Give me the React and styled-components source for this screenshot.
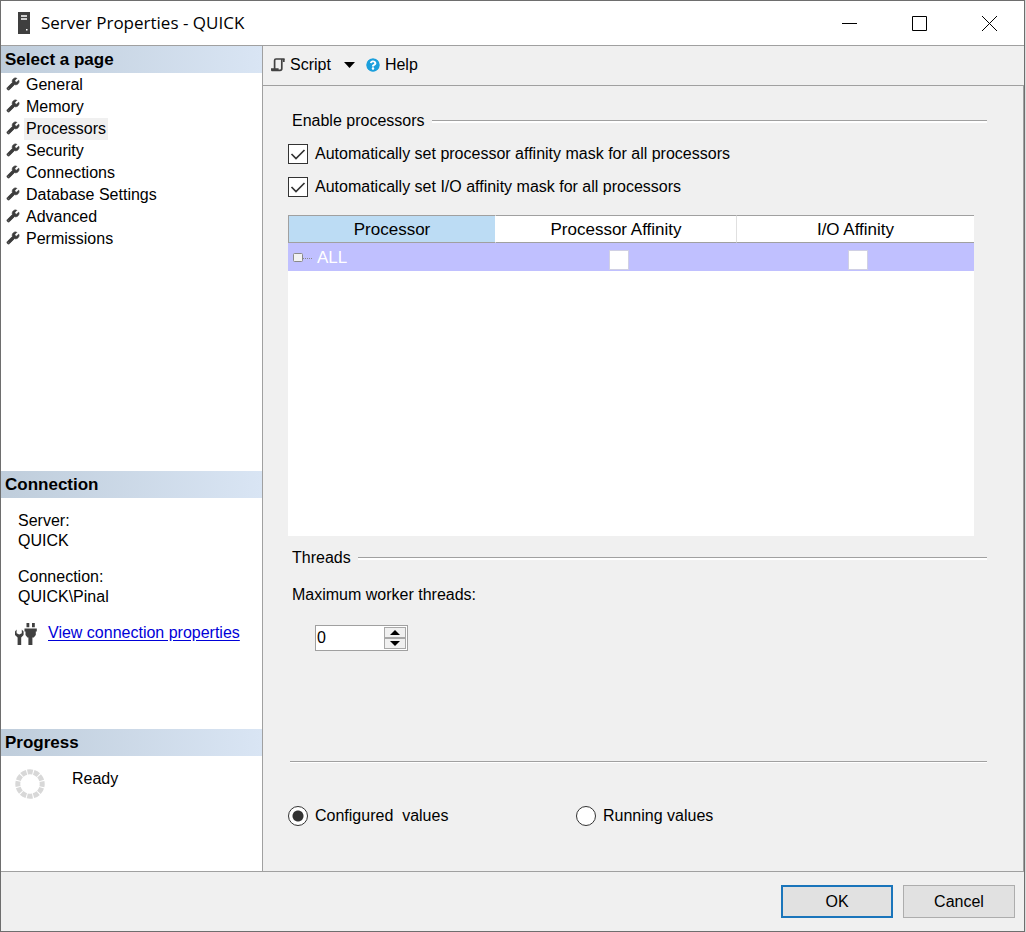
import React, { useState } from 'react'
import styled, { createGlobalStyle } from 'styled-components'
import { FaWrench, FaQuestionCircle } from 'react-icons/fa'

const GlobalStyle = createGlobalStyle`
  * {
    box-sizing: border-box;
  }
  body {
    margin: 0;
    background: #dcdcdc;
  }
  body, button, input {
    font-family: "Liberation Sans", Arial, sans-serif;
    font-size: 16px;
    line-height: 20px;
    color: #000;
  }
`
const Window = styled.div`
  display: flex;
  flex-direction: column;
  min-height: 100vh;
  margin-right: 1px;
  border: 1px solid #6e6e6e;
  background: #f0f0f0;
`
const TitleBar = styled.header`
  display: flex;
  align-items: center;
  height: 45px;
  padding-left: 16px;
  border-bottom: 1px solid #a0a0a0;
  background: #fff;
`
const Title = styled.h1`
  flex: 1;
  margin: 0 0 0 10px;
  font-family: "Open Sans", "Noto Sans", sans-serif;
  font-size: 17px;
  font-weight: 400;
  line-height: 24px;
`
const WindowButton = styled.button`
  display: grid;
  place-items: center;
  width: 70px;
  height: 44px;
  padding: 0;
  border: none;
  background: transparent;
  &:hover {
    background: #e5e5e5;
  }
`
const Body = styled.div`
  flex: 1;
  display: flex;
`
const Sidebar = styled.aside`
  display: flex;
  flex-direction: column;
  width: 262px;
  border-right: 1px solid #a0a0a0;
  background: #fff;
`
const Section = styled.section`
  flex: ${(props) => (props.$height ? 'none' : 1)};
  min-height: ${(props) => props.$height || 0}px;
`
const SectionTitle = styled.h2`
  margin: 0;
  padding: 0 4px;
  font-size: 17px;
  font-weight: 700;
  line-height: 27px;
  background: linear-gradient(to right, #bfcddb, #d9e5f4);
`
const PageList = styled.ul`
  margin: 0;
  padding: 1px 0 0 6px;
  list-style: none;
`
const PageItem = styled.li`
  display: flex;
  align-items: center;
  height: 22px;
  gap: 5px;
  color: #3c3c3c;
`
const WrenchIcon = styled(FaWrench)`
  margin-bottom: 2px;
  overflow: visible;
  stroke-width: 36px;
`
const PageButton = styled.button`
  height: 22px;
  padding: 0 2px;
  border: none;
  background: ${(props) => (props.$active ? '#f0f0f0' : 'transparent')};
`
const Details = styled.dl`
  margin: 13px 0 0 17px;
`
const Term = styled.dt``
const Value = styled.dd`
  margin: 0 0 16px;
`
const LinkRow = styled.div`
  display: flex;
  gap: 11px;
  padding-left: 14px;
`
const Link = styled.a`
  color: #0000d8;
  text-decoration: underline;
  text-underline-offset: 2px;
`
const ProgressRow = styled.div`
  display: flex;
  gap: 27px;
  padding: 13px 14px;
`
const Main = styled.main`
  flex: 1;
  display: flex;
  flex-direction: column;
  min-width: 0;
`
const Toolbar = styled.div`
  display: flex;
  align-items: center;
  height: 40px;
  padding: 0 0 2px 8px;
  border-bottom: 1px solid #a0a0a0;
`
const ToolButton = styled.button`
  display: flex;
  align-items: center;
  gap: 5px;
  padding: 0;
  margin-right: ${(props) => props.$gap || 0}px;
  border: none;
  background: transparent;
`
const HelpIcon = styled(FaQuestionCircle)`
  border-radius: 50%;
  color: #1b9fdc;
  background: radial-gradient(#fff 50%, transparent 51%);
`
const Content = styled.div`
  flex: 1;
  padding: 25px 36px 20px 25px;
  border-right: 1px solid #a0a0a0;
`
const GroupTitle = styled.h3`
  display: flex;
  align-items: center;
  gap: 7px;
  margin: 0;
  padding-left: 4px;
  font-size: 16px;
  font-weight: 400;
  &::after {
    content: "";
    flex: 1;
    height: 2px;
    border-top: 1px solid #a0a0a0;
    background: #fff;
  }
`
const Options = styled.div`
  padding: 6px 0 12px;
`
const OptionLabel = styled.label`
  display: flex;
  align-items: center;
  gap: 7px;
  height: 33px;
`
const CheckWrap = styled.span`
  display: inline-grid;
  width: 20px;
  height: 20px;
  vertical-align: middle;
  & > * {
    grid-area: 1 / 1;
  }
  & > svg {
    pointer-events: none;
  }
`
const CheckInput = styled.input`
  appearance: none;
  width: 20px;
  height: 20px;
  margin: 0;
  border: 1px solid ${(props) => (props.$flat ? '#d0d0e4' : '#333')};
  background: #fff;
`
const Grid = styled.div`
  height: 321px;
  margin-right: 13px;
  background: #fff;
`
const Table = styled.table`
  width: 100%;
  border-collapse: separate;
  border-spacing: 0;
  table-layout: fixed;
  font-size: 17px;
`
const HeadCell = styled.th`
  width: ${(props) => props.$width || 'auto'};
  height: 28px;
  padding: 1px 0 0;
  border-top: 1px solid #a0a0a0;
  border-bottom: 1px solid #a0a0a0;
  border-left: 1px solid ${(props) => props.$edge || '#fff'};
  font-weight: 400;
  background: ${(props) => (props.$selected ? '#bcdcf4' : '#fff')};
`
const Cell = styled.td`
  height: 28px;
  padding: ${(props) => (props.$name ? '1px 4px 0' : '5px 0 0 6px')};
  text-align: ${(props) => (props.$name ? 'left' : 'center')};
  color: #fff;
  line-height: 18px;
  background: #c0c0ff;
`
const NodeName = styled.span`
  display: flex;
  align-items: center;
  gap: 5px;
`
const Threads = styled.div`
  padding-top: 12px;
`
const FieldLabel = styled.label`
  display: block;
  margin: 17px 0 20px;
  padding-left: 4px;
`
const Spinner = styled.div`
  display: flex;
  width: 93px;
  height: 26px;
  margin-left: 27px;
  padding: 1px 0;
  border: 1px solid #a0a0a0;
  background: #fff;
`
const SpinnerInput = styled.input`
  flex: 1;
  min-width: 0;
  padding: 0 1px;
  border: none;
  outline: none;
  appearance: textfield;
  &::-webkit-inner-spin-button {
    appearance: none;
  }
`
const SpinnerButtons = styled.div`
  display: flex;
  flex-direction: column;
  width: 22px;
  margin-right: 1px;
`
const StepButton = styled.button`
  flex: 1;
  display: grid;
  place-items: center;
  padding: 0;
  border: 1px solid #a8a8a8;
  background: #f0f0f0;
`
const Divider = styled.hr`
  height: 2px;
  margin: 110px 0 0 2px;
  border: none;
  border-top: 1px solid #a0a0a0;
  background: #fff;
`
const RadioGroup = styled.div`
  display: grid;
  grid-template-columns: 288px 1fr;
  padding-top: 36px;
`
const RadioInput = styled.input`
  appearance: none;
  width: 20px;
  height: 20px;
  margin: 0;
  border: 1px solid #333;
  border-radius: 50%;
  background: #fff;
  &:checked {
    background: radial-gradient(circle, #333 5px, #fff 6px);
  }
`
const RadioText = styled.span`
  white-space: pre;
`
const Footer = styled.footer`
  display: flex;
  justify-content: flex-end;
  gap: 10px;
  padding: 13px 9px;
  border-top: 1px solid #a0a0a0;
`
const DialogButton = styled.button`
  width: 112px;
  height: 33px;
  padding: 0;
  border: ${(props) => (props.$primary ? '2px solid #1a75bb' : '1px solid #adadad')};
  background: #e1e1e1;
`

const pages = [
  'General',
  'Memory',
  'Processors',
  'Security',
  'Connections',
  'Database Settings',
  'Advanced',
  'Permissions',
]

const ServerIcon = () => (
  <svg width="14" height="22" viewBox="0 0 14 22">
    <path d="M1 0h12v22H1z" fill="#3f3f3f" />
    <path d="M4 4h6M4 7h6" stroke="#fff" strokeWidth="1.3" />
    <path d="M9 17h1.5v1.5H9z" fill="#fff" />
  </svg>
)

const ScriptIcon = () => (
  <svg width="14" height="14" viewBox="0 0 14 14" fill="none" stroke="#424242" strokeWidth="1.7">
    <path d="M3.6 10.8V2.4Q3.6 1 5 1H13.6M10.8 1V10.6Q10.8 12.4 9 12.4H1.6Q.6 12.4.6 11.2H7.6" />
    <path d="M12.8 1V4" />
  </svg>
)

const PlugIcon = () => (
  <svg width="22" height="22" viewBox="0 0 22 22" fill="#404040">
    <path d="M1.6 6.6V10.2L4.2 11.6 6.8 10.2V6.6L8.6 8.4V12L6.2 14.4V22H2.6V14.4L0 12V8.4Z" />
    <path d="M11.5 0h2.8v4.2h-2.8zM17 0h2.8v4.2H17zM9.5 5.5H21.8V8.5H20.8V12L18.8 14.5H17.4V22H13.4V14.5H12.4L10.5 12V8.5H9.5Z" />
  </svg>
)

const ProgressRing = () => (
  <svg width="30" height="30" viewBox="0 0 30 30">
    <circle cx="15" cy="15" r="12.2" fill="none" stroke="#d8d8d8" strokeWidth="5" pathLength="120" strokeDasharray="8.4 1.6" strokeDashoffset="4" />
  </svg>
)

const Arrow = ({ width = 10, height = 5, up }) => (
  <svg width={width} height={height} viewBox="0 0 10 6" preserveAspectRatio="none">
    <path d={up ? 'M5 0 10 6H0Z' : 'M0 0H10L5 6Z'} />
  </svg>
)

const CheckBox = ({ checked, flat, ...rest }) => (
  <CheckWrap>
    <CheckInput type="checkbox" checked={checked} $flat={flat} {...rest} />
    {checked && (
      <svg width="20" height="20" fill="none" stroke="#333" strokeWidth="1.7">
        <path d="M3.5 10 8 14.5 16.5 6" />
      </svg>
    )}
  </CheckWrap>
)

const App = () => {
  const [page, setPage] = useState('Processors')
  const [autoMask, setAutoMask] = useState(true)
  const [autoIo, setAutoIo] = useState(true)
  const [cpu, setCpu] = useState(false)
  const [io, setIo] = useState(false)
  const [threads, setThreads] = useState(0)
  const [view, setView] = useState('configured')

  return (
    <Window>
      <GlobalStyle />
      <TitleBar>
        <ServerIcon />
        <Title>Server Properties - QUICK</Title>
        <WindowButton aria-label="Minimize">
          <svg width="15" height="15"><path d="M0 7.5h15" stroke="#000" /></svg>
        </WindowButton>
        <WindowButton aria-label="Maximize">
          <svg width="15" height="15"><path d="M.5.5h14v14H.5z" fill="none" stroke="#000" /></svg>
        </WindowButton>
        <WindowButton aria-label="Close">
          <svg width="15" height="15"><path d="M0 0 15 15M15 0 0 15" stroke="#000" /></svg>
        </WindowButton>
      </TitleBar>
      <Body>
        <Sidebar>
          <Section>
            <SectionTitle>Select a page</SectionTitle>
            <PageList>
              {pages.map((name) => (
                <PageItem key={name}>
                  <WrenchIcon size={12} />
                  <PageButton $active={name === page} onClick={() => setPage(name)}>{name}</PageButton>
                </PageItem>
              ))}
            </PageList>
          </Section>
          <Section $height={258}>
            <SectionTitle>Connection</SectionTitle>
            <Details>
              <Term>Server:</Term>
              <Value>QUICK</Value>
              <Term>Connection:</Term>
              <Value>QUICK\Pinal</Value>
            </Details>
            <LinkRow>
              <PlugIcon />
              <Link href="#connection">View connection properties</Link>
            </LinkRow>
          </Section>
          <Section $height={142}>
            <SectionTitle>Progress</SectionTitle>
            <ProgressRow>
              <ProgressRing />
              <span>Ready</span>
            </ProgressRow>
          </Section>
        </Sidebar>
        <Main>
          <Toolbar>
            <ToolButton $gap={13}><ScriptIcon />Script</ToolButton>
            <ToolButton $gap={11} aria-label="Script options"><Arrow width={11} height={6} /></ToolButton>
            <ToolButton><HelpIcon size={14} />Help</ToolButton>
          </Toolbar>
          <Content>
            <GroupTitle>Enable processors</GroupTitle>
            <Options>
              <OptionLabel>
                <CheckBox checked={autoMask} onChange={() => setAutoMask(!autoMask)} />
                Automatically set processor affinity mask for all processors
              </OptionLabel>
              <OptionLabel>
                <CheckBox checked={autoIo} onChange={() => setAutoIo(!autoIo)} />
                Automatically set I/O affinity mask for all processors
              </OptionLabel>
            </Options>
            <Grid>
              <Table>
                <thead>
                  <tr>
                    <HeadCell $width="207px" $selected $edge="#a0a0a0">Processor</HeadCell>
                    <HeadCell $width="241px">Processor Affinity</HeadCell>
                    <HeadCell $edge="#e0e0e0">I/O Affinity</HeadCell>
                  </tr>
                </thead>
                <tbody>
                  <tr>
                    <Cell $name>
                      <NodeName>
                        <svg width="20" height="12">
                          <rect x="1.5" y="1.5" width="9" height="8" rx="1" fill="#f2f2f2" stroke="#8a8a8a" />
                          <path d="M11 6.5h9" stroke="#8a8a8a" strokeDasharray="1 1" />
                        </svg>
                        ALL
                      </NodeName>
                    </Cell>
                    <Cell><CheckBox flat checked={cpu} onChange={() => setCpu(!cpu)} aria-label="Processor affinity" /></Cell>
                    <Cell><CheckBox flat checked={io} onChange={() => setIo(!io)} aria-label="I/O affinity" /></Cell>
                  </tr>
                </tbody>
              </Table>
            </Grid>
            <Threads>
              <GroupTitle>Threads</GroupTitle>
              <FieldLabel htmlFor="threads">Maximum worker threads:</FieldLabel>
              <Spinner>
                <SpinnerInput id="threads" type="number" value={threads} onChange={(e) => setThreads(Number(e.target.value))} />
                <SpinnerButtons>
                  <StepButton aria-label="Increase" onClick={() => setThreads(threads + 1)}><Arrow up /></StepButton>
                  <StepButton aria-label="Decrease" onClick={() => setThreads(Math.max(0, threads - 1))}><Arrow /></StepButton>
                </SpinnerButtons>
              </Spinner>
            </Threads>
            <Divider />
            <RadioGroup>
              <OptionLabel>
                <RadioInput type="radio" name="view" checked={view === 'configured'} onChange={() => setView('configured')} />
                <RadioText>{'Configured  values'}</RadioText>
              </OptionLabel>
              <OptionLabel>
                <RadioInput type="radio" name="view" checked={view === 'running'} onChange={() => setView('running')} />
                <RadioText>Running values</RadioText>
              </OptionLabel>
            </RadioGroup>
          </Content>
        </Main>
      </Body>
      <Footer>
        <DialogButton $primary>OK</DialogButton>
        <DialogButton>Cancel</DialogButton>
      </Footer>
    </Window>
  )
}

export default App
